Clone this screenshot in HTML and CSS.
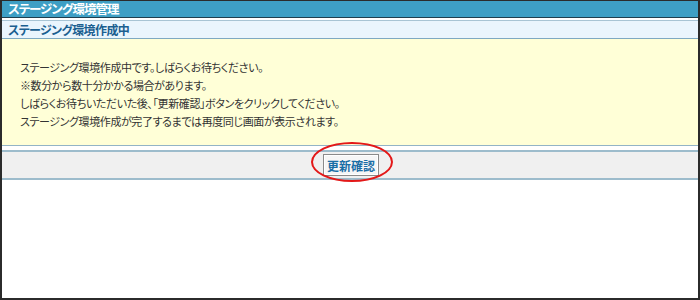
FILE: index.html
```html
<!DOCTYPE html>
<html lang="ja">
    <head>
        <meta charset="UTF-8">
        <title>ステージング環境管理</title>
        <link rel="stylesheet" href="styles.css">
    </head>
    <body>
        <div class="frame">
            <div class="pageTitle">ステージング環境管理</div>
            <div class="sectionTitle">ステージング環境作成中</div>
            <div class="message">
                ステージング環境作成中です。しばらくお待ちください。<br>
                ※数分から数十分かかる場合があります。<br>
                しばらくお待ちいただいた後、「更新確認」ボタンをクリックしてください。<br>
                ステージング環境作成が完了するまでは再度同じ画面が表示されます。
            </div>
            <div class="spacer"></div>
            <div class="actions">
                <span class="btnWrap">
                    <button class="btn">更新確認</button>
                    <span class="mark"></span>
                </span>
            </div>
        </div>
    </body>
</html>
```

FILE: styles.css
```css
body {
    margin: 0;
    background: #ffffff;
    font-family: "Noto Sans CJK JP", "Noto Sans", sans-serif;
    font-size: 12px;
    color: #333333;
    font-feature-settings: "palt";
}

.frame {
    box-sizing: border-box;
    width: 700px;
    height: 300px;
    border: 2px solid #2b2b2b;
    border-top-width: 1px;
    background: #ffffff;
}

.pageTitle {
    height: 16px;
    line-height: 16px;
    padding-left: 6px;
    background: #3e9fc5;
    color: #ffffff;
    font-size: 12.5px;
    font-weight: 700;
    letter-spacing: -1px;
    border-bottom: 1px solid #1f3f4f;
}

.sectionTitle {
    height: 17px;
    line-height: 17px;
    padding-left: 6px;
    margin-top: 2px;
    background: #eaf5fd;
    border-top: 1px solid #a8c4d4;
    border-bottom: 1px solid #7ea9c2;
    color: #1b5f90;
    font-size: 12px;
    font-weight: 700;
    letter-spacing: -0.6px;
}

.message {
    background: #ffffd7;
    padding: 19px 18px 15px;
    font-size: 11px;
    line-height: 18px;
    letter-spacing: -0.4px;
    border-bottom: 1px solid #93b4c6;
}

.spacer {
    height: 4px;
}

.actions {
    display: flex;
    justify-content: center;
    align-items: center;
    height: 26px;
    background: #f0f0f0;
    border-top: 2px solid #9dbccc;
    border-bottom: 2px solid #9dbccc;
}

.btnWrap {
    position: relative;
    display: inline-block;
    margin-left: 2px;
}

.btn {
    display: block;
    height: 22px;
    padding: 0 3px;
    font-family: "Noto Sans CJK JP", sans-serif;
    font-size: 12px;
    font-weight: 700;
    color: #1a6ea6;
    background: #f6f6f6;
    border: 1px solid #8a8a8a;
    box-shadow: inset 0 0 0 1px #ffffff;
}

.mark {
    position: absolute;
    left: -12px;
    top: -12px;
    right: -14px;
    bottom: -6px;
    border: 2px solid #e31818;
    border-radius: 50%;
}
```
